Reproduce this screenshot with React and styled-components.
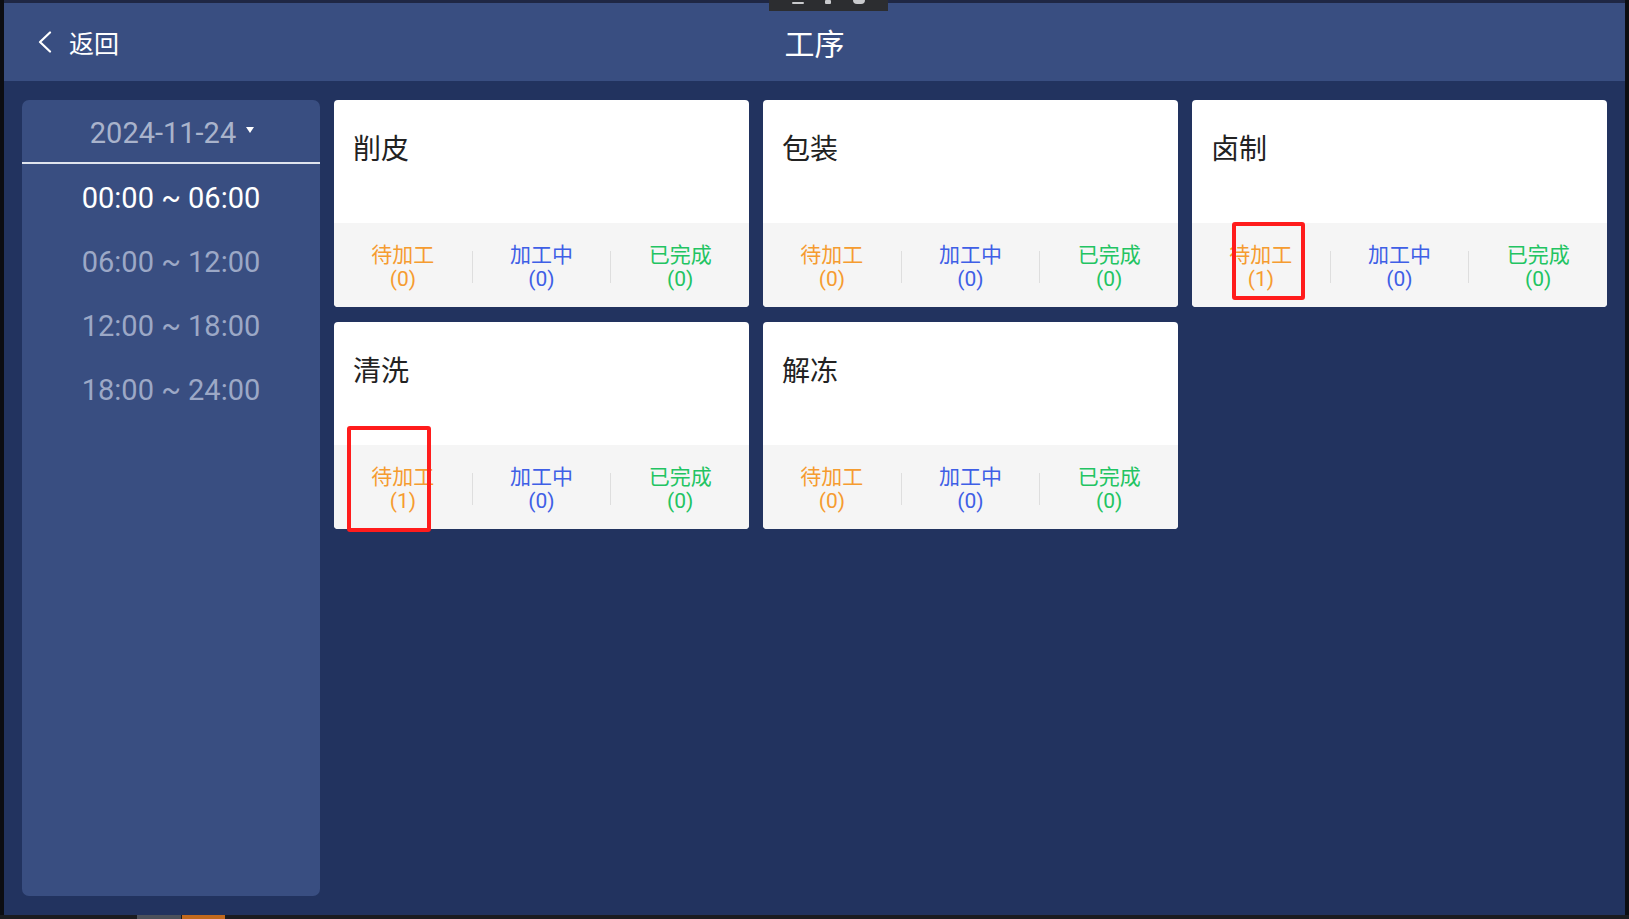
import React from 'react';
import styled, { createGlobalStyle } from 'styled-components';

// === Global styles ===
const GlobalStyle = createGlobalStyle`
  html, body {
    margin: 0;
    padding: 0;
    background: #0c0d12;
  }
  * {
    box-sizing: border-box;
  }
`;

const FONT = `Roboto, "Noto Sans CJK SC", "Noto Sans", sans-serif`;

// === Frame of the screen ===
const Screen = styled.div`
  position: relative;
  width: 1629px;
  height: 919px;
  display: flex;
  flex-direction: column;
  background: #0c0d12;
  font-family: ${FONT};
  overflow: hidden;
`;

const TopEdge = styled.div`
  height: 3px;
  margin: 0 4px;
  background: #1f2744;
`;

const TopTab = styled.div`
  position: absolute;
  top: 0;
  left: 769px;
  width: 119px;
  height: 11px;
  background: #2c2d30;
  display: flex;
  align-items: flex-start;
  justify-content: space-around;
  padding: 0 12px;
  z-index: 5;
`;

const TabMark = styled.span`
  display: block;
  width: ${(p) => p.$w}px;
  height: ${(p) => p.$h}px;
  background: #c9cacd;
  border-radius: ${(p) => (p.$round ? '0 0 6px 6px' : '1px')};
  margin-top: ${(p) => p.$top}px;
`;

const Frame = styled.div`
  flex: 1;
  margin: 0 4px;
  display: flex;
  flex-direction: column;
  min-height: 0;
`;

const BottomEdge = styled.div`
  height: 4px;
  display: flex;
  padding-left: 137px;
  background: #1b1c20;
`;

const EdgeSeg = styled.span`
  width: ${(p) => p.$w}px;
  height: 100%;
  background: ${(p) => p.$color};
  margin-right: 1px;
`;

// === Header ===
const Header = styled.header`
  position: relative;
  height: 78px;
  flex-shrink: 0;
  background: #394e81;
  display: flex;
  align-items: center;
  justify-content: center;
`;

const BackButton = styled.button`
  position: absolute;
  left: 33px;
  top: 50%;
  transform: translateY(-50%);
  display: flex;
  align-items: center;
  gap: 16px;
  border: none;
  background: none;
  padding: 0;
  color: #ffffff;
  font-family: ${FONT};
  font-size: 25px;
  cursor: pointer;
`;

const Title = styled.h1`
  margin: 0;
  color: #ffffff;
  font-size: 30px;
  font-weight: 400;
`;

// === Body ===
const Main = styled.main`
  flex: 1;
  display: flex;
  gap: 14px;
  padding: 19px 18px;
  background: #22335f;
  min-height: 0;
`;

const Sidebar = styled.aside`
  width: 298px;
  flex-shrink: 0;
  background: #394e81;
  border-radius: 7px;
  display: flex;
  flex-direction: column;
`;

const DateRow = styled.div`
  height: 64px;
  display: flex;
  align-items: center;
  justify-content: center;
  gap: 10px;
  padding: 4px 0 0 2px;
  border-bottom: 2px solid #dfe4ee;
  color: #a9b3cb;
  font-size: 29px;
`;

const Caret = styled.span`
  width: 0;
  height: 0;
  border-left: 4px solid transparent;
  border-right: 4px solid transparent;
  border-top: 6px solid #ffffff;
  margin-top: -6px;
`;

const Slot = styled.div`
  height: 64px;
  display: flex;
  align-items: center;
  justify-content: center;
  padding-top: 4px;
  font-size: 29px;
  color: ${(p) => (p.$active ? '#ffffff' : '#9ca8c6')};
`;

const Grid = styled.section`
  flex: 1;
  display: grid;
  grid-template-columns: repeat(3, 415px);
  grid-auto-rows: 207px;
  column-gap: 14px;
  row-gap: 15px;
  align-content: start;
`;

const Card = styled.div`
  background: #ffffff;
  border-radius: 4px;
  overflow: hidden;
  display: flex;
  flex-direction: column;
`;

const CardTitle = styled.div`
  height: 123px;
  padding: 30px 19px 0;
  font-size: 28px;
  line-height: 40px;
  color: #222222;
`;

const CardFooter = styled.div`
  flex: 1;
  background: #f5f5f5;
  display: flex;
  align-items: center;
  padding-top: 4px;
`;

const Stat = styled.div`
  flex: 1;
  display: flex;
  flex-direction: column;
  align-items: center;
  font-size: 21px;
  line-height: 24px;
  color: ${(p) => p.$color};
`;

const Divider = styled.span`
  width: 1px;
  height: 32px;
  background: #dedede;
`;

const Mark = styled.div`
  position: absolute;
  border: 4px solid #ff1c1c;
  border-radius: 3px;
  z-index: 4;
  pointer-events: none;
`;

// === Data ===
const slots = ['00:00 ~ 06:00', '06:00 ~ 12:00', '12:00 ~ 18:00', '18:00 ~ 24:00'];

const processes = [
  { name: '削皮', pending: 0 },
  { name: '包装', pending: 0 },
  { name: '卤制', pending: 1 },
  { name: '清洗', pending: 1 },
  { name: '解冻', pending: 0 },
];

const Chevron = () => (
  <svg width="16" height="22" viewBox="0 0 16 22" fill="none">
    <path d="M13 1.5 L3 11 L13 20.5" stroke="#ffffff" strokeWidth="2.2" strokeLinecap="round" strokeLinejoin="round" />
  </svg>
);

// === App ===
const App = () => (
  <>
    <GlobalStyle />
    <Screen>
      <TopEdge />
      <TopTab>
        <TabMark $w={12} $h={2} $top={2} />
        <TabMark $w={6} $h={4} $top={0} />
        <TabMark $w={12} $h={4} $top={0} $round />
      </TopTab>
      <Frame>
        <Header>
          <BackButton>
            <Chevron />
            返回
          </BackButton>
          <Title>工序</Title>
        </Header>
        <Main>
          <Sidebar>
            <DateRow>
              2024-11-24
              <Caret />
            </DateRow>
            {slots.map((s, i) => (
              <Slot key={s} $active={i === 0}>
                {s}
              </Slot>
            ))}
          </Sidebar>
          <Grid>
            {processes.map((p) => (
              <Card key={p.name}>
                <CardTitle>{p.name}</CardTitle>
                <CardFooter>
                  <Stat $color="#f59c30">
                    <span>待加工</span>
                    <span>({p.pending})</span>
                  </Stat>
                  <Divider />
                  <Stat $color="#3f5fe6">
                    <span>加工中</span>
                    <span>(0)</span>
                  </Stat>
                  <Divider />
                  <Stat $color="#22c462">
                    <span>已完成</span>
                    <span>(0)</span>
                  </Stat>
                </CardFooter>
              </Card>
            ))}
          </Grid>
        </Main>
      </Frame>
      <BottomEdge>
        <EdgeSeg $w={44} $color="#4c515b" />
        <EdgeSeg $w={43} $color="#c2691d" />
      </BottomEdge>
      <Mark style={{ left: 1232, top: 222, width: 73, height: 78 }} />
      <Mark style={{ left: 347, top: 426, width: 84, height: 106 }} />
    </Screen>
  </>
);

export default App;
